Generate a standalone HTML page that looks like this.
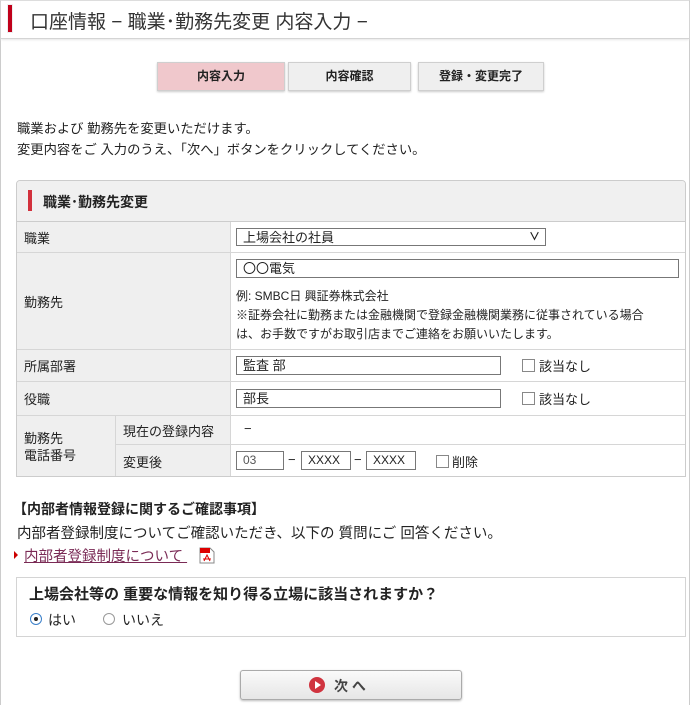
<!DOCTYPE html><html><head><meta charset="utf-8"><style>
*{box-sizing:border-box;margin:0;padding:0}
body{width:690px;height:705px;overflow:hidden;background:#fff;font-family:"Liberation Sans","Noto Sans CJK JP",sans-serif;color:#222;font-size:13px;position:relative}
.a{position:absolute}
.frame{left:0;top:0;width:690px;height:705px;border-left:1px solid #ccc;border-right:1px solid #ccc;border-top:1px solid #ddd}
.hdr{left:1px;top:1px;width:688px;height:38px;border-bottom:1px solid #d4d4d4;box-shadow:0 1px 2px #e6e6e6}
.step{top:62px;height:29px;border:1px solid #cfcfcf;background:#efefef;font-size:12px;font-weight:bold;text-align:center;line-height:27px;box-shadow:0 1px 2px #ccc}
.lab{background:#efefef;border-bottom:1px solid #d6d6d6;border-right:1px solid #d6d6d6;padding-left:7px;display:flex;align-items:center;font-size:13px}
.hl{border-bottom:1px solid #d6d6d6}
.inp{border:1px solid #777;height:19px;font-size:13px;padding-left:6px;line-height:17px;background:#fff}
.cb{width:13px;height:13px;border:1px solid #888;background:#fff}
</style></head><body>
<div class="a frame"></div>
<div class="a hdr"></div>
<div class="a" style="left:7px;top:4px;width:6px;height:29px;background:#c0001a;border:1px solid #eee"></div>
<div class="a" style="left:30px;top:7px;font-size:19px;color:#333">口座情報 − 職業･勤務先変更 内容入力 −</div>
<div class="a step" style="left:157px;width:128px;background:#f0c8cc">内容入力</div>
<div class="a step" style="left:288px;width:123px">内容確認</div>
<div class="a step" style="left:418px;width:126px">登録・変更完了</div>
<div class="a" style="left:17px;top:118px;line-height:21px;font-size:13.3px">職業および 勤務先を変更いただけます。<br>変更内容をご 入力のうえ、「次へ」ボタンをクリックしてください。</div>
<div class="a" style="left:16px;top:180px;width:670px;height:297px;border:1px solid #ccc;border-radius:4px 4px 0 0;overflow:hidden">
 <div class="a" style="left:0;top:0;width:670px;height:41px;background:#f0f0f0;border-bottom:1px solid #ccc"></div>
 <div class="a" style="left:11px;top:9px;width:4px;height:21px;background:#d2303c"></div>
 <div class="a" style="left:26px;top:11px;font-size:14px;font-weight:bold">職業･勤務先変更</div>
 <div class="a lab" style="left:0;top:41px;width:214px;height:31px">職業</div>
 <div class="a hl" style="left:214px;top:41px;width:456px;height:31px"></div>
 <div class="a lab" style="left:0;top:72px;width:214px;height:97px">勤務先</div>
 <div class="a hl" style="left:214px;top:72px;width:456px;height:97px"></div>
 <div class="a lab" style="left:0;top:169px;width:214px;height:32px">所属部署</div>
 <div class="a hl" style="left:214px;top:169px;width:456px;height:32px"></div>
 <div class="a lab" style="left:0;top:201px;width:214px;height:34px">役職</div>
 <div class="a hl" style="left:214px;top:201px;width:456px;height:34px"></div>
 <div class="a lab" style="left:0;top:235px;width:99px;height:62px;line-height:17px">勤務先<br>電話番号</div>
 <div class="a lab" style="left:99px;top:235px;width:115px;height:29px">現在の登録内容</div>
 <div class="a lab" style="left:99px;top:264px;width:115px;height:33px">変更後</div>
 <div class="a hl" style="left:214px;top:235px;width:456px;height:29px"></div>
</div>
<div class="a inp" style="left:236px;top:228px;width:310px;height:18px">上場会社の社員<span style="position:absolute;right:5px;top:0;font-size:11px;font-weight:bold">&#8744;</span></div>
<div class="a inp" style="left:236px;top:259px;width:443px">〇〇電気</div>
<div class="a" style="left:236px;top:287px;font-size:12px;line-height:19px">例: SMBC日 興証券株式会社<br>※証券会社に勤務または金融機関で登録金融機関業務に従事されている場合<br>は、お手数ですがお取引店までご連絡をお願いいたします。</div>
<div class="a inp" style="left:236px;top:356px;width:265px">監査 部</div>
<div class="a cb" style="left:522px;top:359px"></div><div class="a" style="left:539px;top:356px">該当なし</div>
<div class="a inp" style="left:236px;top:389px;width:265px">部長</div>
<div class="a cb" style="left:522px;top:392px"></div><div class="a" style="left:539px;top:389px">該当なし</div>
<div class="a" style="left:244px;top:421px">−</div>
<div class="a inp" style="left:236px;top:451px;width:48px;font-size:12px;color:#555">03</div>
<div class="a" style="left:288px;top:452px">−</div>
<div class="a inp" style="left:301px;top:451px;width:50px;font-size:12px">XXXX</div>
<div class="a" style="left:354px;top:452px">−</div>
<div class="a inp" style="left:366px;top:451px;width:50px;font-size:12px">XXXX</div>
<div class="a cb" style="left:436px;top:455px"></div><div class="a" style="left:452px;top:452px">削除</div>
<div class="a" style="left:13px;top:499px;font-weight:bold;font-size:14px">【内部者情報登録に関するご確認事項】</div>
<div class="a" style="left:17px;top:522px;font-size:14.5px">内部者登録制度についてご確認いただき、以下の 質問にご 回答ください。</div>
<div class="a" style="left:14px;top:551px;width:0;height:0;border-left:4px solid #c00;border-top:4px solid transparent;border-bottom:4px solid transparent"></div>
<div class="a" style="left:24px;top:545px;color:#7a2a55;text-decoration:underline;font-size:14.5px;white-space:pre">内部者登録制度について </div>
<svg class="a" style="left:199px;top:547px" width="16" height="17"><path d="M1 1h10l4 4v11H1z" fill="#fff" stroke="#888"/><path d="M1 1h10v5H1z" fill="#d00"/><path d="M5 14l3-6 3 6M4 12h8" stroke="#d00" fill="none"/></svg>
<div class="a" style="left:16px;top:577px;width:670px;height:60px;border:1px solid #d4d4d4"></div>
<div class="a" style="left:29px;top:583px;font-weight:bold;font-size:15px">上場会社等の 重要な情報を知り得る立場に該当されますか？</div>
<div class="a" style="left:30px;top:613px;width:12px;height:12px;border-radius:50%;border:1px solid #3a7fc9;background:#fff"><div style="margin:3px;width:4px;height:4px;border-radius:50%;background:#222"></div></div>
<div class="a" style="left:48px;top:610px;font-size:14px">はい</div>
<div class="a" style="left:103px;top:613px;width:12px;height:12px;border-radius:50%;border:1px solid #999"></div>
<div class="a" style="left:122px;top:610px;font-size:14px">いいえ</div>
<div class="a" style="left:240px;top:670px;width:222px;height:30px;border:1px solid #aaa;border-radius:3px;background:linear-gradient(#fafafa,#e6e6e6);box-shadow:0 1px 2px #bbb"></div>
<div class="a" style="left:309px;top:677px;width:16px;height:16px;border-radius:50%;background:#d0343f"><div style="position:absolute;left:6px;top:4px;border-left:6px solid #fff;border-top:4px solid transparent;border-bottom:4px solid transparent"></div></div>
<div class="a" style="left:334px;top:676px;font-weight:bold;font-size:14px;color:#444">次 へ</div>
</body></html>
